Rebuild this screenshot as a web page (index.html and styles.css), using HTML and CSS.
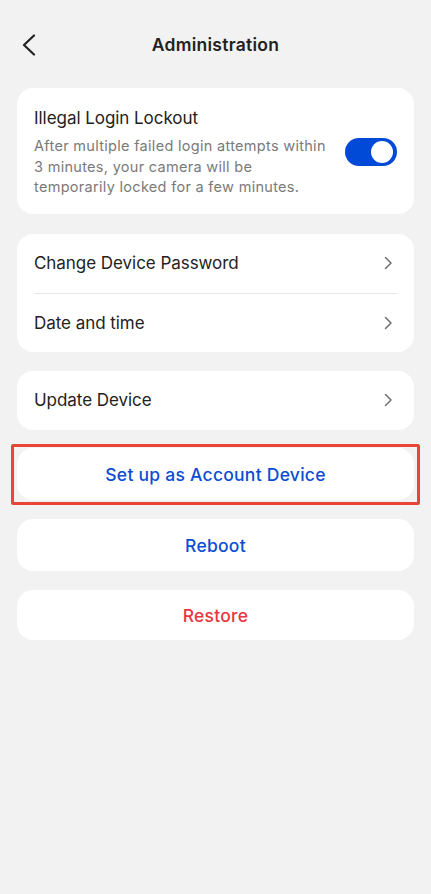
FILE: index.html
```html
<!DOCTYPE html>
<html lang="en">

<head>
    <meta charset="UTF-8">
    <meta name="viewport" content="width=device-width, initial-scale=1.0">
    <title>Administration</title>
    <link rel="stylesheet" href="styles.css">
</head>

<body>
    <header class="topbar">
        <button class="back" aria-label="Back">
            <svg width="14" height="22" viewBox="0 0 14 22">
                <polyline points="12,1.5 2,11 12,20.5" fill="none" stroke="#222" stroke-width="2.2"
                    stroke-linecap="round" stroke-linejoin="round" />
            </svg>
        </button>
        <h1>Administration</h1>
    </header>

    <main class="list">
        <section class="card lockout">
            <div class="lockout-text">
                <div class="row-title">Illegal Login Lockout</div>
                <p class="desc">After multiple failed login attempts within 3 minutes, your camera will be temporarily
                    locked for a few minutes.</p>
            </div>
            <div class="toggle on"><span class="knob"></span></div>
        </section>

        <section class="card group">
            <div class="row">
                <span>Change Device Password</span>
                <svg class="chev" width="9" height="14" viewBox="0 0 9 14">
                    <polyline points="1.5,1.5 7,7 1.5,12.5" fill="none" stroke="#6f6f6f" stroke-width="1.5"
                        stroke-linecap="round" stroke-linejoin="round" />
                </svg>
            </div>
            <div class="divider"></div>
            <div class="row">
                <span>Date and time</span>
                <svg class="chev" width="9" height="14" viewBox="0 0 9 14">
                    <polyline points="1.5,1.5 7,7 1.5,12.5" fill="none" stroke="#6f6f6f" stroke-width="1.5"
                        stroke-linecap="round" stroke-linejoin="round" />
                </svg>
            </div>
        </section>

        <section class="card group single">
            <div class="row">
                <span>Update Device</span>
                <svg class="chev" width="9" height="14" viewBox="0 0 9 14">
                    <polyline points="1.5,1.5 7,7 1.5,12.5" fill="none" stroke="#6f6f6f" stroke-width="1.5"
                        stroke-linecap="round" stroke-linejoin="round" />
                </svg>
            </div>
        </section>

        <div class="highlight">
            <button class="card action blue">Set up as Account Device</button>
        </div>
        <button class="card action blue reboot">Reboot</button>
        <button class="card action red restore">Restore</button>
    </main>
</body>

</html>
```

FILE: styles.css
```css
* {
    margin: 0;
    padding: 0;
    box-sizing: border-box;
    font-family: Inter, "Noto Sans", sans-serif;
}

html,
body {
    height: 100%;
    width: 100%;
}

body {
    background-color: #f2f2f2;
    color: #222;
    overflow: hidden;
}

.topbar {
    position: relative;
    height: 88px;
    padding-top: 33px;
    text-align: center;
}

.topbar h1 {
    font-size: 17.5px;
    font-weight: 600;
    line-height: 24px;
    letter-spacing: 0.25px;
    color: #222;
}

.back {
    position: absolute;
    left: 22px;
    top: 34px;
    border: none;
    background: none;
    width: 14px;
    height: 22px;
}

.back svg {
    display: block;
}

.list {
    display: flex;
    flex-direction: column;
    padding: 0 17px;
}

.card {
    background-color: #fff;
    border-radius: 16px;
    border: none;
}

.lockout {
    display: flex;
    align-items: center;
    justify-content: space-between;
    padding: 18px 17px 16px 17px;
}

.lockout-text {
    width: 300px;
}

.row-title {
    font-size: 17px;
    line-height: 24px;
    letter-spacing: -0.05px;
}

.desc {
    margin-top: 6px;
    font-size: 14.5px;
    line-height: 20.5px;
    color: #7a7a7a;
    letter-spacing: 0.3px;
}

.toggle {
    width: 52px;
    height: 28px;
    border-radius: 14px;
    background-color: #0149d7;
    position: relative;
    flex-shrink: 0;
}

.toggle .knob {
    position: absolute;
    right: 4px;
    top: 3px;
    width: 22px;
    height: 22px;
    border-radius: 50%;
    background-color: #fff;
}

.group {
    margin-top: 20px;
}

.group.single {
    margin-top: 19px;
}

.row {
    height: 59px;
    display: flex;
    align-items: center;
    justify-content: space-between;
    padding: 0 21px 0 17px;
    font-size: 17px;
    letter-spacing: -0.05px;
}

.row+.divider+.row {
    height: 58px;
}

.divider {
    height: 1px;
    background-color: #e6e6e6;
    margin: 0 17px;
}

.highlight {
    margin: 14px -6px 0 -6px;
    border: 3px solid #ea4437;
    border-radius: 2px;
    padding: 1px 3px 2px 3px;
}

.action {
    width: 100%;
    height: 52px;
    padding-top: 2px;
    font-size: 17.5px;
    font-weight: 500;
    text-align: center;
    letter-spacing: 0.25px;
}

.blue {
    color: #0b4ed2;
}

.red {
    color: #ea3641;
}

.reboot {
    margin-top: 14px;
}

.restore {
    margin-top: 19px;
    height: 50px;
}
```
